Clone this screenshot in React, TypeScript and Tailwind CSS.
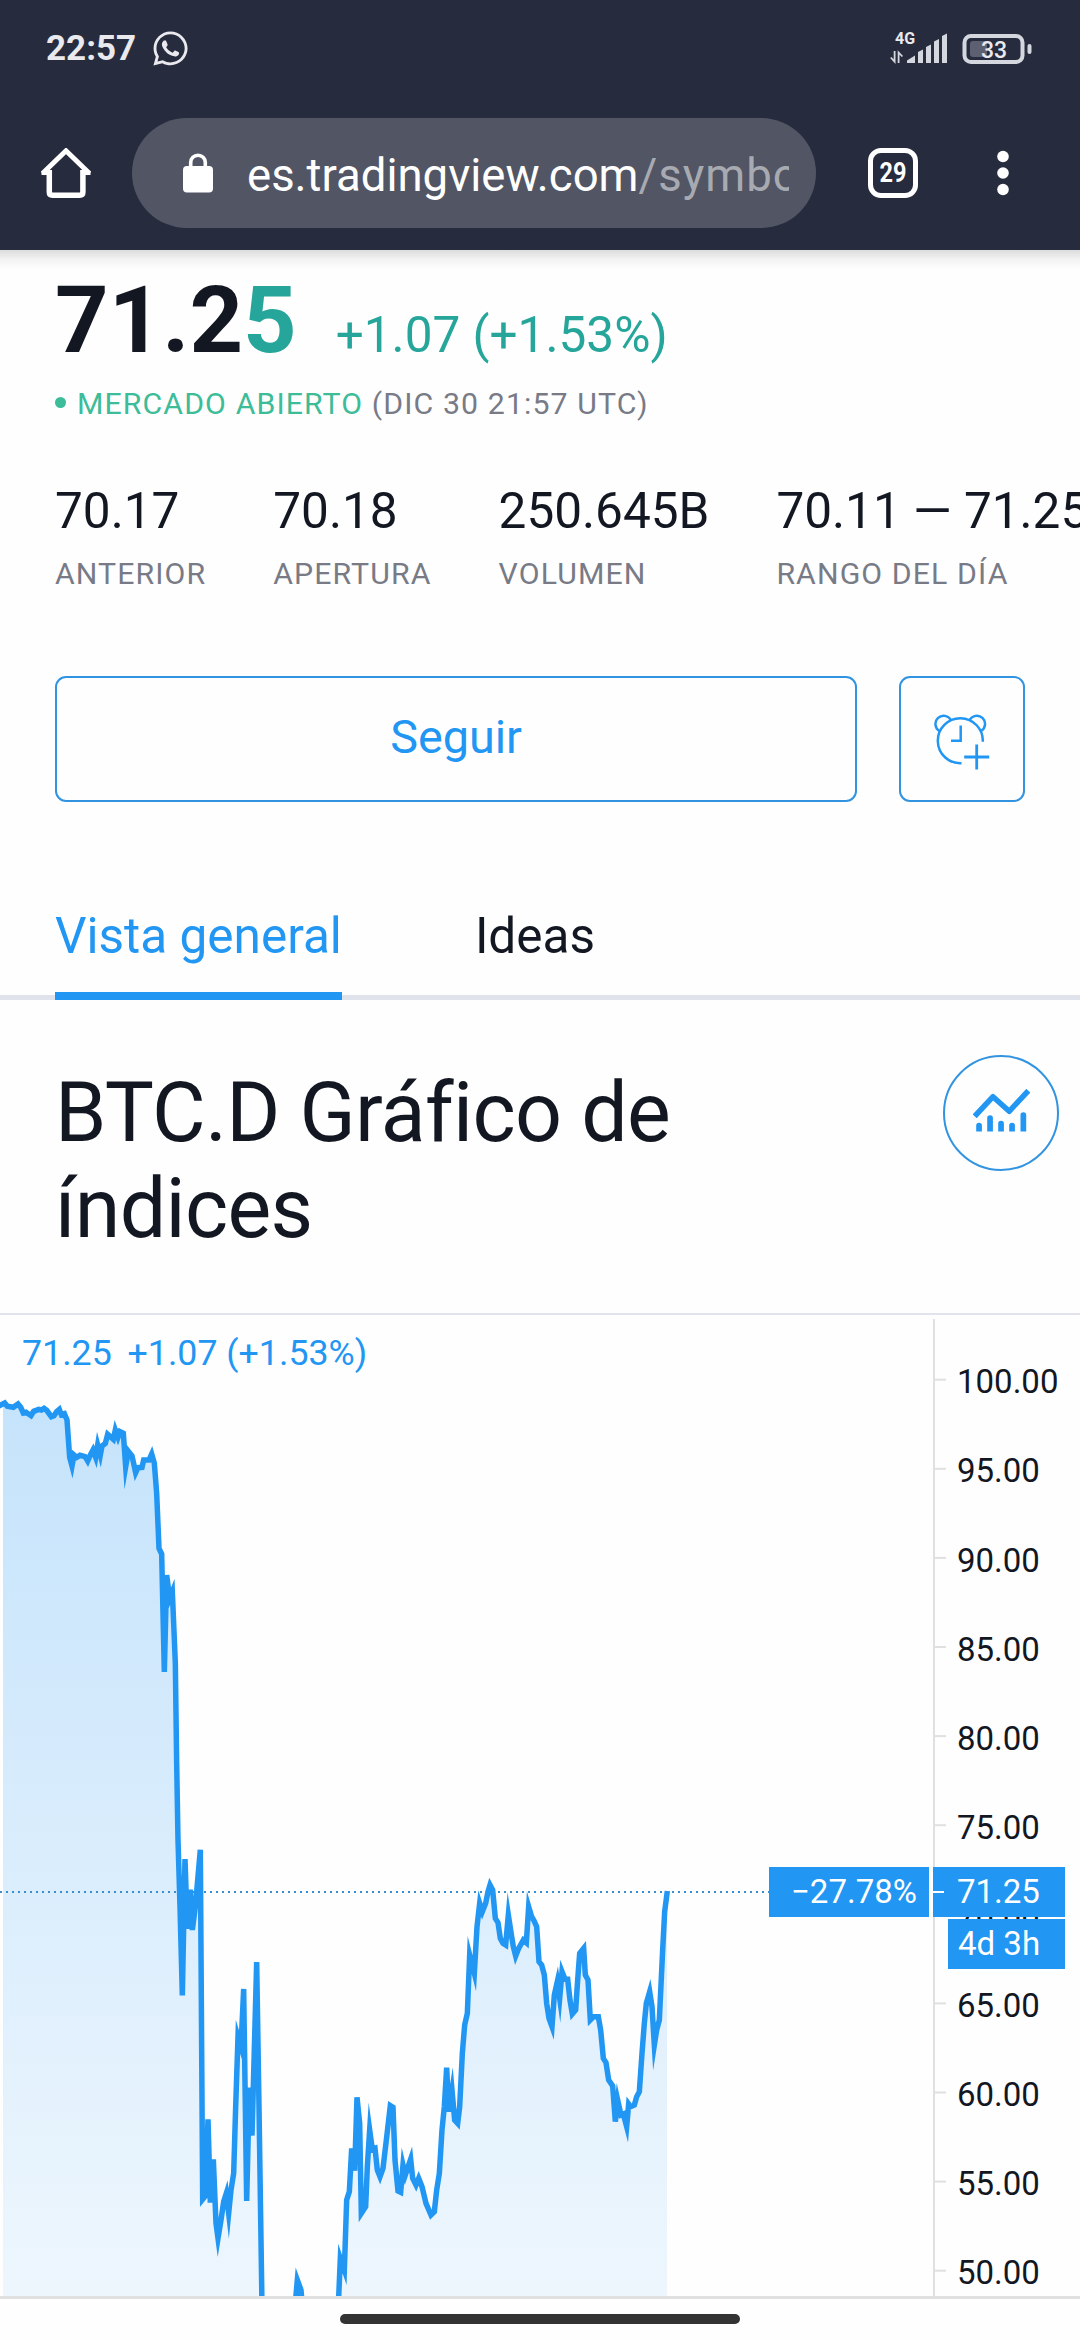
import { FaWhatsapp } from "react-icons/fa6";

/* Mobile symbol page: browser chrome on top, quote header, tabs and the area chart. */

const STATS = [
  { value: "70.17", label: "Anterior" },
  { value: "70.18", label: "Apertura" },
  { value: "250.645B", label: "Volumen" },
  { value: "70.11 — 71.25", label: "Rango del día" },
];

// price axis: 100.00 sits at y=65, one step of 5 is 89px
const TICKS = [100, 95, 90, 85, 80, 75, 70, 65, 60, 55, 50];

// closes in thirds of a pixel, each run relative to its own origin
const RUNS = [
  {
    x: 0, y: 65,
    points: [
      [-4, 78], [14, 69], [22, 79], [40, 82], [54, 72], [62, 82], [70, 99], [78, 97], [93, 107], [101, 94], [116, 88], [124, 90],
      [132, 85], [140, 91], [154, 110], [162, 107], [170, 95], [178, 88], [184, 104], [193, 101], [201, 120], [209, 232], [216, 258],
      [222, 225], [230, 232], [240, 226], [255, 230], [263, 243], [271, 225], [279, 210], [287, 232], [293, 195], [301, 225],
      [306, 198], [316, 190], [323, 163], [331, 170], [340, 178], [346, 150], [354, 172], [360, 155], [370, 160], [377, 260],
      [385, 214], [396, 228], [407, 278], [414, 263], [426, 262], [431, 240], [447, 240], [455, 222], [463, 250], [470, 340],
      [477, 505], [485, 522], [493, 876], [500, 585], [509, 655], [517, 635], [526, 850], [530, 1150],
    ],
  },
  {
    x: 0, y: 525,
    points: [
      [534, 0], [540, 200], [547, 466], [555, 57], [562, 266], [571, 149], [577, 270], [586, 200], [601, 29], [608, 1078],
      [616, 1068], [624, 838], [631, 1088], [640, 958], [648, 1150], [654, 1195], [663, 1140], [671, 1085], [679, 1060],
      [686, 1120], [693, 1050], [701, 1000], [707, 800], [714, 590], [723, 620], [731, 447], [740, 1083], [748, 743],
      [756, 887], [770, 366], [777, 800], [786, 1400], [870, 1420], [885, 1400], [892, 1320], [903, 1350], [909, 1420],
    ],
  },
  {
    x: 320, y: 525,
    points: [
      [54, 1420], [61, 1255], [73, 1290], [80, 1080], [88, 1055], [95, 925], [104, 992], [111, 772], [119, 850], [124, 1120],
      [137, 1100], [142, 980], [149, 870], [157, 928], [165, 925], [172, 990], [180, 1010], [189, 985], [199, 900], [211, 797],
      [219, 802], [225, 960], [234, 1053], [242, 1057], [249, 975], [256, 1005], [272, 958], [278, 1015], [288, 1035], [296, 1015],
      [306, 1040], [318, 1090], [333, 1125], [343, 1115], [350, 1050], [358, 1000], [366, 870], [373, 800], [380, 683], [386, 815],
      [396, 750], [404, 840], [413, 850], [419, 800], [427, 640], [434, 555], [442, 520], [449, 345], [463, 400], [471, 260],
      [479, 190], [487, 215], [497, 190], [504, 155], [510, 135], [518, 150], [526, 235], [534, 248], [541, 295], [549, 310],
      [557, 315], [565, 225], [575, 290], [580, 320], [587, 348], [596, 325], [610, 300], [619, 308], [626, 200], [635, 230],
      [642, 242], [650, 260], [657, 365], [665, 375], [673, 405], [680, 490], [687, 535], [696, 560], [703, 465], [712, 425],
      [719, 475], [726, 395], [735, 418], [743, 418], [750, 480], [757, 522], [767, 510], [773, 420], [779, 340], [791, 325],
      [796, 405], [804, 420], [811, 540], [821, 530], [835, 530], [842, 570], [850, 655], [858, 668], [866, 720], [878, 738],
      [886, 845], [893, 780], [903, 825], [910, 822], [920, 860], [926, 792], [932, 800], [943, 795], [950, 770], [958, 755],
      [966, 640], [973, 550], [979, 490], [989, 455], [996, 500], [1003, 615], [1010, 570], [1018, 540], [1028, 330],
      [1034, 215], [1042, 153],
    ],
  },
];

const LINE = RUNS.flatMap((r) => r.points.map(([x, y]) => `${(r.x + x / 3).toFixed(2)},${(r.y + y / 3).toFixed(2)}`)).join(" L");

function StatusBar() {
  return (
    <div className="flex h-24 items-center pr-[48px] pl-[46px] pt-0.5 text-[#e9e9ee]">
      <span className="text-[35px] font-bold leading-10">22:57</span>
      <FaWhatsapp className="ml-[15px] -mt-0.5" size={39} />
      <svg className="ml-auto" width="142" height="36" viewBox="0 0 142 36">
        <text x="5" y="13" fontSize="16" fontWeight="700" fill="currentColor">4G</text>
        <g stroke="#d5d7de" strokeWidth="1.8" fill="none">
          <path d="M4.6 20v10.600L.8 26.500" />
          <path d="M8.600 32V21.500l3.800 4" />
        </g>
        <g fill="#d5d7de">
          <path d="M17 32v-2.500l8-5V32z" />
          <path d="M28 32V21l5-2.500V32z" />
          <path d="M36 32V16l5-2.500V32z" />
          <path d="M44 32V10.500l5-2.500V32z" />
          <path d="M52 32V5l5-2.500V32z" />
          <rect x="80" y="10" width="17" height="16" rx="3" fill="#5c6071" />
          <rect x="137.500" y="13" width="4" height="10" rx="2" />
        </g>
        <rect x="74.500" y="5" width="58" height="26" rx="6.500" fill="none" stroke="#d5d7de" strokeWidth="4" />
        <text x="104" y="26.500" fontSize="23" fontWeight="500" fill="currentColor" textAnchor="middle">33</text>
      </svg>
    </div>
  );
}

function Toolbar() {
  return (
    <div className="flex h-[154px] items-center pl-[41px] text-white">
      <svg width="50" height="50" viewBox="0 0 50 50" fill="none" stroke="currentColor" strokeWidth="5.500">
        <path d="M1.500 25.500 25 2.800l23.500 22.700" strokeWidth="5" />
        <path d="M.5 25h8M41.500 25h8" strokeWidth="4" />
        <path d="M8.300 22v22q0 3.200 3.200 3.200h27.200q3.200 0 3.200-3.200V22" />
      </svg>
      <div className="ml-[41px] flex h-[110px] w-[684px] items-center rounded-full bg-[#525564] pl-[51px]">
        <svg width="30" height="40" viewBox="0 0 30 40">
          <rect y="13" width="30" height="26.500" rx="4" fill="currentColor" />
          <path d="M7.700 14V9.500a7.300 7.300 0 0 1 14.600 0V14" fill="none" stroke="currentColor" strokeWidth="3.600" />
        </svg>
        <div className="ml-[34px] w-[542px] overflow-hidden pt-[5px] text-[45.500px] leading-[60px] whitespace-nowrap">
          es.tradingview.com<span className="tracking-[1px] text-[#a8aab1]">/symbols</span>
        </div>
      </div>
      <div className="ml-[52px] grid h-[50px] w-[50px] place-items-center rounded-[13px] border-[5.500px] border-white">
        <span className="scale-x-[0.84] text-[28px] font-bold leading-none">29</span>
      </div>
      <svg className="ml-[79px]" width="12" height="46" viewBox="0 0 12 46" fill="currentColor">
        <circle cx="6" cy="6.500" r="5.800" />
        <circle cx="6" cy="23" r="5.800" />
        <circle cx="6" cy="39.500" r="5.800" />
      </svg>
    </div>
  );
}

function AlarmIcon() {
  return (
    <svg width="56" height="56" viewBox="0 0 56 56" fill="none" stroke="currentColor" strokeWidth="2.500">
      <path d="M48.800 27.700A22.500 22.500 0 1 0 27.500 49.200" />
      <path d="M17 6.300A8.200 8.200 0 1 0 5.500 17" />
      <path d="M35.500 6.300A8.200 8.200 0 1 1 47 17" />
      <path d="M26.700 11.500v15.200H17" />
      <path d="M42.700 30.500V55.500M30.200 43h25" strokeWidth="2.800" />
    </svg>
  );
}

function Quote() {
  return (
    <section className="px-[55px] pt-5">
      <div className="flex h-[100px] items-baseline leading-[100px]">
        <span className="text-[93.500px] font-bold">71.2<span className="text-[#26a69a]">5</span></span>
        <span className="ml-[39px] text-[49.500px] text-[#26a69a]">+1.07 (+1.53%)</span>
      </div>
      <div className="mt-3.5 flex items-center text-[30.250px] leading-10 tracking-[1.100px] whitespace-pre">
        <span className="mr-[11px] -mt-[3px] h-[11px] w-[11px] rounded-full bg-[#3cbc98]" />
        <span className="text-[#3cbc98]">MERCADO ABIERTO</span>
        <span className="text-[#787b86]"> (DIC 30 21:57 UTC)</span>
      </div>
      <div className="mt-[57px] flex gap-[67px] whitespace-nowrap">
        {STATS.map((s) => (
          <div key={s.label}>
            <div className="text-[49.500px] leading-[60px]">{s.value}</div>
            <div className="mt-[13px] text-[30.250px] leading-10 tracking-[1.100px] text-[#787b86] uppercase">{s.label}</div>
          </div>
        ))}
      </div>
      <div className="mt-[82px] flex gap-[42px] text-[#2196f3]">
        <button className="h-[126px] w-[803px] rounded-[11px] border-2 border-[#3294e0] pb-1 text-[46.750px]">Seguir</button>
        <button className="grid h-[126px] w-[126px] place-items-center rounded-[11px] border-2 border-[#3294e0] pt-[5px]"><AlarmIcon /></button>
      </div>
    </section>
  );
}

function Tabs() {
  return (
    <nav className="mt-[104px] flex gap-[133px] px-[55px] text-[49.500px] leading-[60px] shadow-[inset_0_-5px_0_#e0e3eb]">
      <span className="border-b-8 border-[#2196f3] pb-[26px] text-[#2196f3]">Vista general</span>
      <span className="pb-[26px]">Ideas</span>
    </nav>
  );
}

function ChartTitle() {
  return (
    <section className="flex h-[313px] items-start justify-between pr-[21px] pl-[55px]">
      <h2 className="mt-[65px] text-[82.500px] leading-[96px] tracking-[-0.650px]">BTC.D Gráfico de<br />índices</h2>
      <button className="mt-[55px] grid h-[116px] w-[116px] place-items-center rounded-full border-2 border-[#3294e0] pb-1 text-[#2196f3]">
        <svg width="57" height="44" viewBox="0 0 57 44" stroke="currentColor" fill="none">
          <path d="M1.700 27.300 20 7.700l16.200 14.600L55.300 1.700" strokeWidth="5.500" strokeLinejoin="round" />
          <g fill="currentColor" stroke="none">
            <path d="M3.200 42.500v-6a2.850 2.850 0 0 1 5.700 0v6z" />
            <path d="M14.200 42.500V29a2.850 2.850 0 0 1 5.700 0v13.500z" />
            <path d="M25.200 42.500v-8a2.850 2.850 0 0 1 5.700 0v8z" />
            <path d="M36.200 42.500v-6a2.850 2.850 0 0 1 5.700 0v6z" />
            <path d="M47.500 42.500V26a2.850 2.850 0 0 1 5.700 0v16.500z" />
          </g>
        </svg>
      </button>
    </section>
  );
}

function Chart() {
  return (
    <div className="border-t-2 border-b-[3px] border-t-[#e0e3eb] border-b-[#e0e0e0]">
      <svg className="block" width="1080" height="981" viewBox="0 0 1080 981">
        <defs>
          <linearGradient id="area" gradientUnits="userSpaceOnUse" x1="0" y1="4" x2="0" y2="981">
            <stop offset="0" stopColor="#2196f3" stopOpacity="0.275" />
            <stop offset="1" stopColor="#2196f3" stopOpacity="0.075" />
          </linearGradient>
          <clipPath id="pane"><rect x="3" width="664" height="981" /></clipPath>
        </defs>

        <path d={`M${LINE} V1100 H-2 Z`} fill="url(#area)" clipPath="url(#pane)" />
        <path d="M0 577H769" stroke="#3a8fd0" strokeWidth="2" strokeDasharray="2 4" />
        <path d={`M${LINE}`} fill="none" stroke="#2196f3" strokeWidth="5.500" strokeMiterlimit="10" />

        <path d="M934 4V981" stroke="#e0e0e0" strokeWidth="2" />
        {TICKS.map((t, i) => (
          <g key={t}>
            <path d={`M935 ${64.7 + i * 89.1}h11`} stroke="#e0e0e0" strokeWidth="2" />
            <text x="957" y={78.3 + i * 89.1} fontSize="33" fill="#131722">{t.toFixed(2)}</text>
          </g>
        ))}

        <text x="22" y="50" fontSize="35.750" fill="#2196f3">71.25</text>
        <text x="127.500" y="50" fontSize="35.750" fill="#2196f3">+1.07 (+1.53%)</text>

        <g fill="#2196f3">
          <rect x="769" y="552" width="160" height="50" />
          <rect x="933" y="552" width="132" height="50" />
          <rect x="948" y="604" width="117" height="50" />
        </g>
        <path d="M933 577h11" stroke="#fff" strokeWidth="2" />
        <g fill="#fff" fontSize="33">
          <text x="791" y="588">−27.78%</text>
          <text x="957" y="588">71.25</text>
          <text x="958" y="640">4d 3h</text>
        </g>
      </svg>
    </div>
  );
}

export default function App() {
  return (
    <div className="flex h-[2340px] w-[1080px] flex-col overflow-hidden bg-[#fefefe] font-['Roboto',sans-serif] text-[#131722]">
      <header className="h-[250px] shrink-0 bg-[#262b3e]">
        <StatusBar />
        <Toolbar />
      </header>
      <main className="bg-[linear-gradient(#dcdcdc,#f4f4f4_10px,#fefefe_20px)]">
        <Quote />
        <Tabs />
        <ChartTitle />
        <Chart />
      </main>
      <div className="mx-auto mt-[15px] h-2.5 w-[400px] shrink-0 rounded-full bg-[#333333]" />
    </div>
  );
}
